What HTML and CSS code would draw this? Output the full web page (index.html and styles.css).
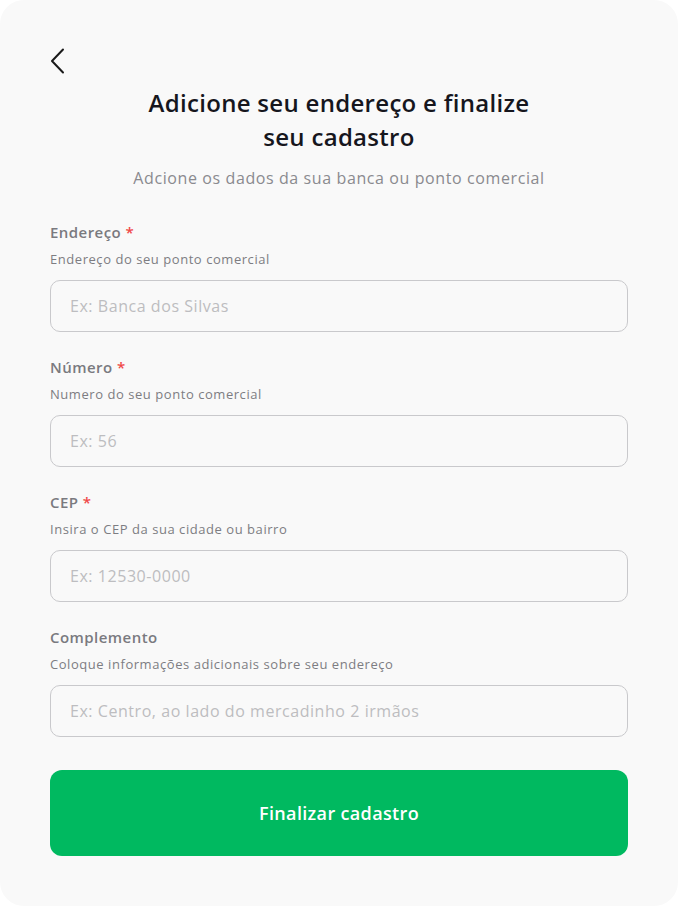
FILE: index.html
```html
<!DOCTYPE html>
<html lang="pt-BR">
<head>
<meta charset="utf-8">
<link rel="stylesheet" href="styles.css">
</head>
<body>
<main class="card">
  <button class="back" aria-label="Voltar">
    <svg width="16" height="26" viewBox="0 0 16 26" fill="none"><path d="M13 1.5 L2 13 L13 24.5" stroke="#1a1a1a" stroke-width="2" stroke-linecap="round" stroke-linejoin="round"/></svg>
  </button>
  <h1 class="title">Adicione seu endereço e finalize<br>seu cadastro</h1>
  <p class="subtitle">Adcione os dados da sua banca ou ponto comercial</p>

  <div class="field">
    <label class="label">Endereço <span class="req">*</span></label>
    <p class="hint">Endereço do seu ponto comercial</p>
    <input class="input" placeholder="Ex: Banca dos Silvas">
  </div>
  <div class="field">
    <label class="label">Número <span class="req">*</span></label>
    <p class="hint">Numero do seu ponto comercial</p>
    <input class="input" placeholder="Ex: 56">
  </div>
  <div class="field">
    <label class="label">CEP <span class="req">*</span></label>
    <p class="hint">Insira o CEP da sua cidade ou bairro</p>
    <input class="input" placeholder="Ex: 12530-0000">
  </div>
  <div class="field">
    <label class="label">Complemento</label>
    <p class="hint">Coloque informações adicionais sobre seu endereço</p>
    <input class="input" placeholder="Ex: Centro, ao lado do mercadinho 2 irmãos">
  </div>

  <button class="submit">Finalizar cadastro</button>
</main>
</body>
</html>
```
FILE: styles.css
```css
* { box-sizing: border-box; }
html, body { margin: 0; padding: 0; background: #ffffff; }
body { width: 678px; height: 906px; font-family: "Open Sans", "Noto Sans", sans-serif; }
.card {
  width: 678px;
  height: 906px;
  background: #f9f9f9;
  border-radius: 24px;
  padding: 48px 50px 0;
  display: flex;
  flex-direction: column;
}
.back {
  width: 16px;
  height: 26px;
  padding: 0;
  border: 0;
  background: none;
  display: block;
  cursor: pointer;
}
.back svg { display: block; }
.title {
  margin: 12px 0 0;
  text-align: center;
  font-size: 24px;
  line-height: 34px;
  font-weight: 600;
  letter-spacing: 0.3px;
  color: #16161d;
}
.subtitle {
  margin: 13px 0 0;
  text-align: center;
  font-size: 16px;
  line-height: 22px;
  letter-spacing: 0.6px;
  color: #8a8a8f;
}
.field { display: flex; flex-direction: column; margin-top: 33px; }
.field + .field { margin-top: 25px; }
.label {
  font-size: 15px;
  line-height: 20px;
  font-weight: 600;
  letter-spacing: 0.45px;
  color: #7a7a7f;
}
.req { color: #f04848; }
.hint {
  margin: 8px 0 0;
  font-size: 13px;
  line-height: 18px;
  letter-spacing: 0.55px;
  color: #7d7d82;
}
.input {
  margin-top: 12px;
  height: 52px;
  width: 100%;
  border: 1px solid #c9c9cc;
  border-radius: 10px;
  background: transparent;
  padding: 0 19px;
  font-family: inherit;
  font-size: 16px;
  letter-spacing: 0.55px;
  color: #333;
  outline: none;
}
.input::placeholder { color: #bdbdc0; }
.submit {
  margin-top: 33px;
  height: 86px;
  width: 100%;
  border: 0;
  border-radius: 12px;
  background: #00b960;
  color: #ffffff;
  font-family: inherit;
  font-size: 18px;
  font-weight: 600;
  letter-spacing: 0.35px;
  cursor: pointer;
}
```
